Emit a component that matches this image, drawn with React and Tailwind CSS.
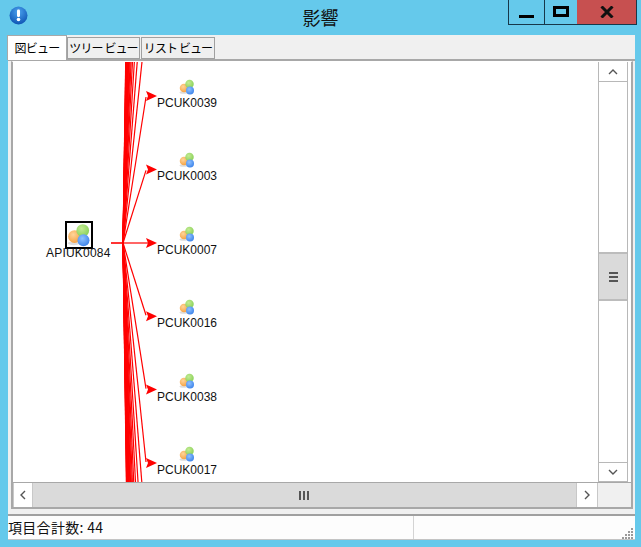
const ORIGIN = { x: 123, y: 243 }
const ROW_GAP = 73.4
const VISIBLE = ['PCUK0039', 'PCUK0003', 'PCUK0007', 'PCUK0016', 'PCUK0038', 'PCUK0017']

// canvas starts at page (13, 62)
const CANVAS_X = 13
const CANVAS_Y = 62

// 44 items in total, 19 are scrolled off above and 19 below
const rows = []
for (let i = -19; i < 25; i++) rows.push(96 + i * ROW_GAP)

const NodeIcon = ({ size }) => (
  <svg width={size} height={size} viewBox="0 0 32 32">
    <defs>
      <radialGradient id="orangeBall" cx="40%" cy="35%" r="70%">
        <stop offset="0%" stopColor="#ffd59a" />
        <stop offset="100%" stopColor="#f5a040" />
      </radialGradient>
      <radialGradient id="greenBall" cx="40%" cy="35%" r="70%">
        <stop offset="0%" stopColor="#c4ec94" />
        <stop offset="100%" stopColor="#86cf55" />
      </radialGradient>
      <radialGradient id="blueBall" cx="40%" cy="35%" r="70%">
        <stop offset="0%" stopColor="#8fc2ff" />
        <stop offset="100%" stopColor="#3b82ea" />
      </radialGradient>
    </defs>
    <ellipse cx="9" cy="27" rx="8" ry="2.5" fill="#dddddd" />
    <circle cx="10" cy="18" r="8.5" fill="url(#orangeBall)" />
    <circle cx="21" cy="10" r="8.5" fill="url(#greenBall)" />
    <circle cx="22" cy="23" r="8" fill="url(#blueBall)" />
  </svg>
)

const Edges = () => (
  <svg className="absolute left-0 top-0" width="585" height="420" viewBox={`${CANVAS_X} ${CANVAS_Y} 585 420`}>
    {rows.map((y) => {
      const middle = Math.abs(y - ORIGIN.y) < 1
      const arrowY = middle ? ORIGIN.y : y
      return (
        <g key={y}>
          <line
            x1={ORIGIN.x}
            y1={ORIGIN.y}
            x2={middle ? 148 : 146}
            y2={middle ? ORIGIN.y : y > ORIGIN.y ? y - 1 : y + 1}
            stroke="#ff0000"
            strokeWidth="1.2"
          />
          <polygon points={`157,${arrowY} 146,${arrowY - 5} 148,${arrowY} 146,${arrowY + 5}`} fill="#ff0000" />
        </g>
      )
    })}
    <line x1="111" y1={ORIGIN.y} x2={ORIGIN.x} y2={ORIGIN.y} stroke="#ff0000" strokeWidth="1.6" />
  </svg>
)

const Node = ({ label, top }) => (
  <div className="absolute left-[144px] flex w-[60px] flex-col items-center" style={{ top: top - CANVAS_Y - 17 }}>
    <NodeIcon size={16} />
    <span className="mt-[1px] text-[12px] leading-[14px] text-[#111]">{label}</span>
  </div>
)

const Tab = ({ label, active }) => (
  <div
    className={
      active
        ? 'z-10 -ml-[1px] flex h-[25px] w-[60px] items-center justify-center border border-b-0 border-[#a8a8a8] bg-white text-[12px] tracking-[-0.8px] whitespace-nowrap text-black'
        : 'mt-[2px] flex h-[22px] items-center justify-center border border-[#a0a0a0] bg-[#efefef] text-[12px] tracking-[-0.9px] whitespace-nowrap text-black'
    }
  >
    {label}
  </div>
)

const ScrollBtn = ({ className, points }) => (
  <div className={`flex items-center justify-center bg-white ${className}`}>
    <svg width="12" height="12" viewBox="0 0 12 12">
      <polyline points={points} fill="none" stroke="#555" strokeWidth="1.4" />
    </svg>
  </div>
)

export default function App() {
  return (
    <div className="flex h-[547px] w-[641px] flex-col bg-[#65c9eb] font-['Liberation_Sans','Noto_Sans_CJK_JP',sans-serif]">
      <div className="relative flex h-[35px] shrink-0 items-center justify-center">
        <svg className="absolute left-[9px] top-[6px]" width="19" height="19" viewBox="0 0 19 19">
          <defs>
            <radialGradient id="infoBall" cx="50%" cy="30%" r="75%">
              <stop offset="0%" stopColor="#4aa2ee" />
              <stop offset="100%" stopColor="#0a4fb0" />
            </radialGradient>
          </defs>
          <circle cx="9.5" cy="9.5" r="9" fill="url(#infoBall)" />
          <rect x="8" y="3.5" width="3" height="7.5" rx="1.2" fill="#fff" />
          <circle cx="9.5" cy="13.5" r="1.8" fill="#fff" />
        </svg>
        <span className="font-['Noto_Sans_CJK_JP',sans-serif] text-[18px] text-[#111]">影響</span>
        <div className="absolute right-[4px] top-0 flex h-[25px] border border-t-0 border-[#17384a]">
          <div className="flex w-[36px] items-end justify-center border-r border-[#17384a] pb-[6px]">
            <div className="h-[3px] w-[15px] bg-black" />
          </div>
          <div className="flex w-[32px] items-start justify-center pt-[6px]">
            <div className="h-[11px] w-[16px] border-[3px] border-black" />
          </div>
          <div className="flex w-[59px] items-center justify-center bg-[#c75050]">
            <svg width="14" height="12" viewBox="0 0 14 12">
              <path d="M1.5 0.5 L12.5 11.5 M12.5 0.5 L1.5 11.5" stroke="#111" strokeWidth="3" />
            </svg>
          </div>
        </div>
      </div>

      <div className="ml-[8px] mr-[6px] flex h-[505px] flex-col bg-[#f0f0f0]">
        <div className="flex h-[24px] shrink-0 font-['Noto_Sans_CJK_JP',sans-serif]">
          <Tab label="図ビュー" active />
          <div className="w-[73px]"><Tab label="ツリー ビュー" /></div>
          <div className="ml-[1px] w-[74px]"><Tab label="リスト ビュー" /></div>
        </div>

        <div className="h-[2px] shrink-0 bg-[#a8a8a8]" />

        <div className="ml-[3px] mr-[2px] flex h-[448px] shrink-0 flex-col border-t border-r-2 border-b border-l-2 border-[#a8a8a8] border-t-white bg-white">
          <div className="flex h-[420px] shrink-0">
            <div className="relative w-[585px] overflow-hidden">
              <Edges />
              <div className="absolute left-[52px] top-[159px] flex h-[28px] w-[28px] items-center justify-center border-2 border-black bg-white">
                <NodeIcon size={24} />
              </div>
              <span className="absolute left-[33px] top-[184px] text-[12px] leading-[14px] tracking-[0.2px] text-[#111]">APIUK0084</span>
              {VISIBLE.map((label, i) => (
                <Node key={label} label={label} top={96 + i * ROW_GAP} />
              ))}
            </div>
            <div className="flex w-[30px] flex-col border-x border-[#b8b8b8] bg-white">
              <ScrollBtn className="h-[20px] border-b border-[#b8b8b8]" points="2,8 6,4 10,8" />
              <div className="h-[170px]" />
              <div className="flex h-[49px] items-center justify-center border-y-2 border-[#bcbcbc] bg-[#dadada]">
                <div className="flex flex-col gap-[2px]">
                  <div className="h-[2px] w-[9px] bg-[#555]" />
                  <div className="h-[2px] w-[9px] bg-[#555]" />
                  <div className="h-[2px] w-[9px] bg-[#555]" />
                </div>
              </div>
              <div className="flex-1" />
              <ScrollBtn className="h-[20px] border-y border-[#b8b8b8]" points="2,4 6,8 10,4" />
            </div>
          </div>
          <div className="flex flex-1 border-y border-[#a8a8a8] bg-white">
            <ScrollBtn className="w-[20px] border-x border-[#c8c8c8]" points="8,2 4,6 8,10" />
            <div className="flex w-[543px] items-center justify-center bg-[#dadada] pr-[2px]">
              <div className="flex gap-[2px]">
                <div className="h-[9px] w-[2px] bg-[#555]" />
                <div className="h-[9px] w-[2px] bg-[#555]" />
                <div className="h-[9px] w-[2px] bg-[#555]" />
              </div>
            </div>
            <ScrollBtn className="w-[22px] border-x border-[#c8c8c8]" points="4,2 8,6 4,10" />
            <div className="flex-1 bg-[#f0f0f0]" />
          </div>
        </div>

        <div className="mt-[5px] h-[2px] shrink-0 bg-[#a0a0a0]" />

        <div className="relative flex flex-1 border-b border-[#c4c4c4] bg-[#fdfdfd]">
          <div className="flex w-[406px] items-center border-r border-[#d4d4d4] pb-[1px] font-['Noto_Sans_CJK_JP',sans-serif] text-[14px] tracking-[0.3px] text-[#111]">
            項目合計数: 44
          </div>
          <svg className="absolute bottom-0 right-[1px]" width="12" height="12" viewBox="0 0 12 12" fill="#9a9a9a">
            <rect x="9" y="1" width="2" height="2" />
            <rect x="6" y="4" width="2" height="2" />
            <rect x="9" y="4" width="2" height="2" />
            <rect x="3" y="7" width="2" height="2" />
            <rect x="6" y="7" width="2" height="2" />
            <rect x="9" y="7" width="2" height="2" />
            <rect x="0" y="10" width="2" height="2" />
            <rect x="3" y="10" width="2" height="2" />
            <rect x="6" y="10" width="2" height="2" />
            <rect x="9" y="10" width="2" height="2" />
          </svg>
        </div>
      </div>
    </div>
  )
}
